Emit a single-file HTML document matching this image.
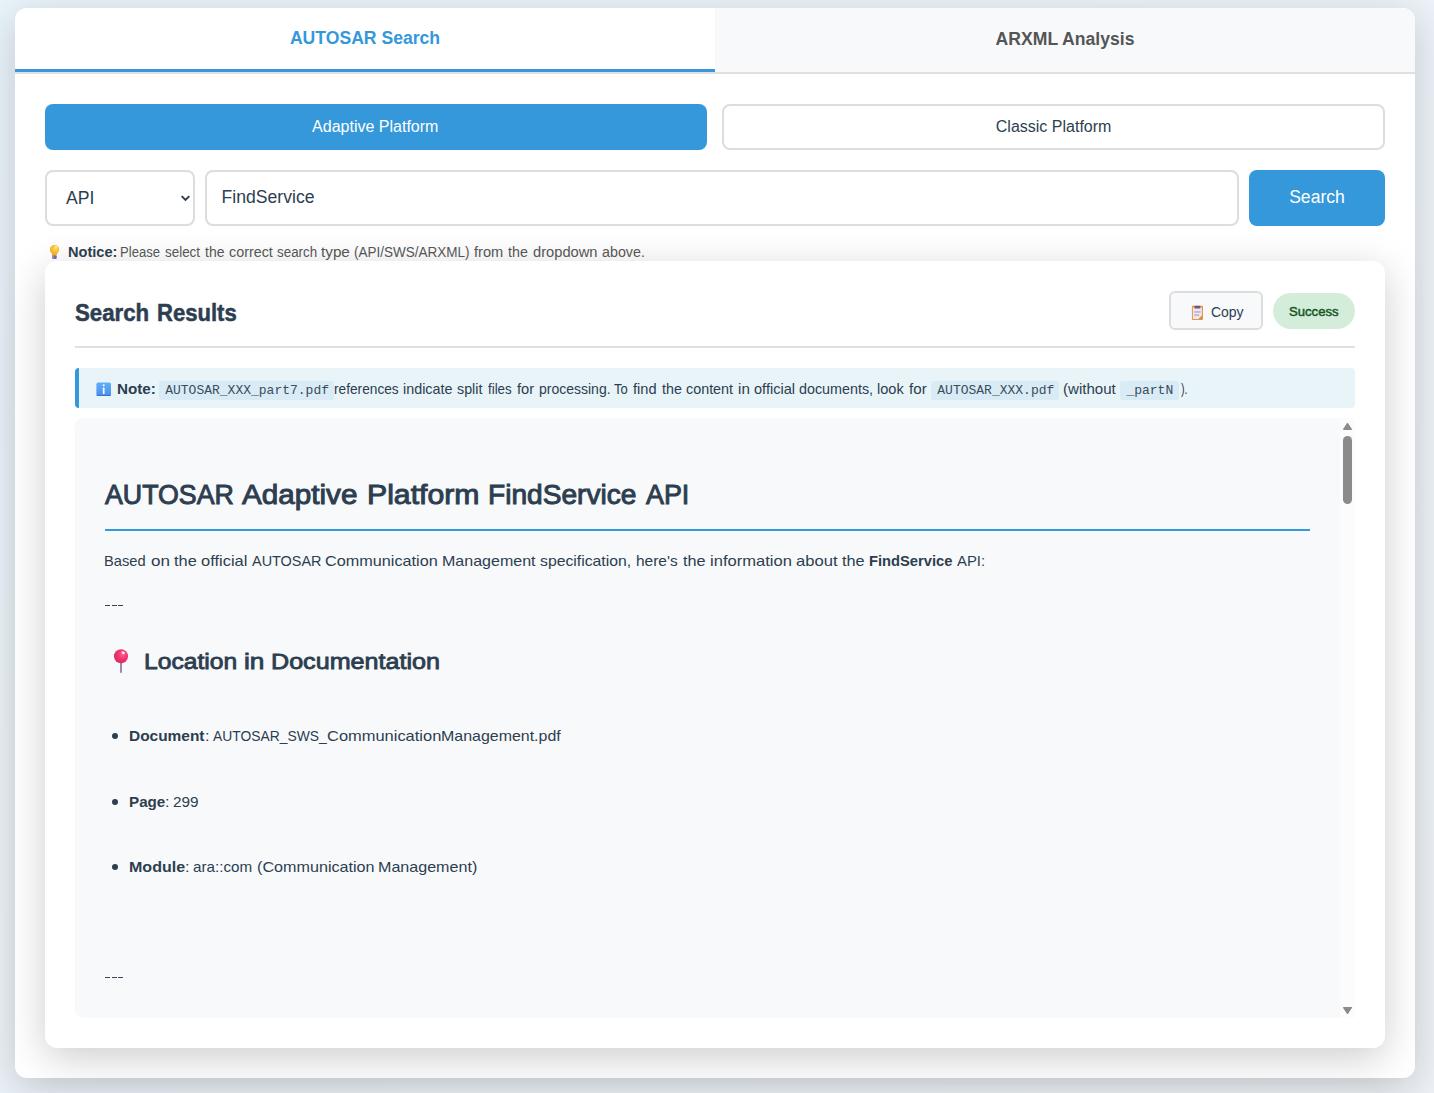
<!DOCTYPE html>
<html lang="en">
<head>
<meta charset="utf-8">
<title>AUTOSAR Search</title>
<style>
*{box-sizing:border-box;margin:0;padding:0}
html,body{width:1434px;height:1093px;overflow:hidden}
body{font-family:"Liberation Sans",sans-serif;background:linear-gradient(135deg,#e9f3fa 0%,#eef2f6 100%);position:relative;color:#2c3e50}
.abs{position:absolute}
.container{position:absolute;left:15px;top:8px;width:1400px;height:1070px;background:#fff;border-radius:12px;box-shadow:0 10px 40px rgba(0,0,0,.18)}
.tabs{position:absolute;left:0;top:0;width:1400px;height:66px;border-bottom:2px solid #e0e0e0;border-radius:12px 12px 0 0;overflow:hidden}
.tab{position:absolute;top:0;height:64px;width:700px;font-weight:bold;font-size:17.6px;text-align:center;border-bottom:3px solid transparent}
.tab.active{left:0;background:#fff;color:#3498db;border-bottom-color:#3498db;line-height:61px}
.tab.inactive{left:700px;background:#f8f9fa;color:#555;line-height:63px}
.pbtn{position:absolute;top:96px;height:46px;border-radius:8px;font-size:16px;text-align:center;line-height:46px}
.pbtn.on{left:30px;width:662px;background:#3498db;color:#fff;padding-right:1.5px}
.pbtn.off{left:707.200px;width:662.800px;background:#fff;color:#2c3e50;border:2px solid #ddd;line-height:42px}
.sel{position:absolute;left:30px;top:162px;width:150px;height:56px;border:2px solid #ddd;border-radius:8px;background:#fff;font-size:17.6px;color:#2c3e50}
.inp{position:absolute;left:190px;top:162px;width:1034px;height:56px;border:2px solid #ddd;border-radius:8px;background:#fff;font-size:17.6px;color:#2c3e50}
.sbtn{position:absolute;left:1234px;top:162px;width:136px;height:56px;border-radius:8px;background:#3498db;color:#fff;font-size:17.6px;text-align:center;line-height:54px}
.t{position:absolute;white-space:pre;line-height:1;transform-origin:0 0}
.results{position:absolute;left:30px;top:253px;width:1340px;height:787px;background:#fff;border-radius:12px;box-shadow:0 10px 40px rgba(0,0,0,.2)}
.hr{position:absolute;left:30px;top:85px;width:1280px;height:2px;background:#e0e0e0}

.copy{position:absolute;left:1124px;top:30.300px;width:94px;height:39px;border:2px solid #ddd;border-radius:6px;background:#f8f9fa}
.succ{position:absolute;left:1228px;top:32px;width:82px;height:36px;border-radius:18px;background:#d4edda}
.note{position:absolute;left:30px;top:107px;width:1280px;height:40px;background:#e8f4f8;border-left:4px solid #3498db;border-radius:4px}
code{font-family:"Liberation Mono",monospace;font-size:13px;position:absolute;top:13px;height:19px;line-height:19px;padding:0 0 0 6px;background:#d9ebf5;border-radius:3px;color:#3b4c5e;white-space:pre}
.content{position:absolute;left:30px;top:157px;width:1280px;height:600px;background:#f8f9fa;border-radius:8px 0 0 8px;overflow:hidden}
.sbar{position:absolute;right:0;top:0;width:15px;height:600px;background:#fcfcfc}
.bul{position:absolute;width:6.200px;height:6.200px;border-radius:50%;background:#2c3e50}
.dash{position:absolute;height:1px;width:4.800px;background:#34465a}
#txt{position:absolute;left:0;top:0;width:1434px;height:1093px}
</style>
</head>
<body>
<div class="container">
  <div class="tabs">
    <div class="tab active">AUTOSAR Search</div>
    <div class="tab inactive">ARXML Analysis</div>
  </div>
  <div class="pbtn on">Adaptive Platform</div>
  <div class="pbtn off">Classic Platform</div>
  <div class="sel"><span class="t" style="left:19px;top:18px">API</span>
    <svg class="abs" style="left:131.500px;top:20.900px" width="14" height="12" viewBox="0 0 14 12"><path d="M2.700 3.100 L6.500 6.900 L10.300 3.100" fill="none" stroke="#2c3e50" stroke-width="2"/></svg>
  </div>
  <div class="inp"><span class="t" style="left:14.600px;top:17px">FindService</span></div>
  <div class="sbtn">Search</div>

  <svg class="abs" style="left:33px;top:235px" width="14" height="17" viewBox="0 0 14 17">
    <defs><radialGradient id="bg" cx="60%" cy="35%" r="70%"><stop offset="0" stop-color="#ffe27a"/><stop offset=".5" stop-color="#fdc02f"/><stop offset="1" stop-color="#f9a825"/></radialGradient></defs>
    <path d="M6.500 2 C3.900 2 1.850 4 1.850 6.550 C1.850 8.200 2.700 9.300 3.500 10.200 C4 10.800 4.300 11.400 4.300 12.200 L8.700 12.200 C8.700 11.400 9 10.800 9.500 10.200 C10.300 9.300 11.150 8.200 11.150 6.550 C11.150 4 9.100 2 6.500 2 Z" fill="url(#bg)"/>
    <ellipse cx="8" cy="3.900" rx="1.100" ry=".7" fill="#fff" opacity=".8" transform="rotate(35 8 3.900)"/>
    <rect x="4.100" y="12.200" width="4.600" height="3.900" rx="1" fill="#8660b5"/>
    <rect x="4.100" y="12.200" width="2.100" height="3.900" rx=".8" fill="#9d92aa"/>
  </svg>

  <div class="results">
    <div class="copy">
      <svg class="abs" style="left:20px;top:11.300px" width="13" height="16" viewBox="0 0 13 16">
        <rect x=".9" y=".8" width="11.100" height="14.300" rx=".8" fill="#e8963e"/>
        <rect x="1.900" y="2.400" width="9" height="11.600" fill="#ece6f5"/>
        <path d="M7.400 14 L10.900 10.500 L10.900 14z" fill="#d98a3a"/>
        <rect x="3.400" y=".8" width="6" height="2.800" rx=".9" fill="#6b5b73"/>
        <rect x="3.200" y="6.200" width="6.400" height="1.500" fill="#b9b0c6"/>
        <rect x="3.200" y="9.300" width="5" height="1.500" fill="#b9b0c6"/>
      </svg>
      <span class="t" style="left:39.900px;top:11.500px;font-size:14px">Copy</span>
    </div>
    <div class="succ"></div>
    <div class="hr"></div>

    <div class="note">
      <svg class="abs" style="left:16.500px;top:13.500px" width="16" height="15" viewBox="0 0 16 15">
        <defs><linearGradient id="ig" x1="0" y1="0" x2="0" y2="1"><stop offset="0" stop-color="#5db0fa"/><stop offset="1" stop-color="#4a8ee8"/></linearGradient></defs>
        <rect x=".4" y=".4" width="14.600" height="13.700" rx="1.800" fill="url(#ig)"/>
        <rect x=".6" y="13" width="14.200" height="1.100" rx=".55" fill="#3a6fd8"/>
        <circle cx="7.700" cy="3.300" r="1.100" fill="#fdf0ff"/>
        <rect x="6.800" y="5.400" width="1.800" height="6.800" rx=".9" fill="#fdf0ff"/>
      </svg>
      <code style="left:80.200px;width:174.500px">AUTOSAR_XXX_part7.pdf</code>
      <code style="left:852.300px;width:128.200px">AUTOSAR_XXX.pdf</code>
      <code style="left:1041.400px;width:58.600px">_partN</code>
    </div>

    <div class="content">
      <div class="sbar">
        <svg class="abs" style="left:0;top:0" width="15" height="600" viewBox="0 0 15 600">
          <path d="M3.700 11.300 L7.500 5.700 L11.300 11.300z" fill="#8b8b8b" stroke="#8b8b8b" stroke-width="1.400" stroke-linejoin="round"/>
          <rect x="3" y="18" width="9" height="68" rx="4.500" fill="#8b8b8b"/>
          <path d="M3.700 589.700 L7.500 595.300 L11.300 589.700z" fill="#8b8b8b" stroke="#8b8b8b" stroke-width="1.400" stroke-linejoin="round"/>
        </svg>
      </div>
      <div class="abs" style="left:30px;top:111.0px;width:1205px;height:2px;background:#3498db"></div>
      <div class="dash" style="left:30.200px;top:187.0px"></div><div class="dash" style="left:36.900px;top:187.0px"></div><div class="dash" style="left:43.100px;top:187.0px"></div>
      <svg class="abs" style="left:38px;top:230.0px" width="18" height="26" viewBox="0 0 18 26">
        <defs><radialGradient id="pg" cx="62%" cy="38%" r="65%"><stop offset="0" stop-color="#ff5c8d"/><stop offset=".55" stop-color="#f2336d"/><stop offset="1" stop-color="#d22d62"/></radialGradient></defs>
        <rect x="7" y="14.500" width="2" height="10.300" fill="#9b8ba8"/>
        <circle cx="8" cy="8.200" r="7" fill="url(#pg)"/>
        <ellipse cx="10.200" cy="4.800" rx="1.900" ry="1.300" fill="#fff" opacity=".85" transform="rotate(25 10.200 4.800)"/>
      </svg>
      <div class="bul" style="left:36.900px;top:314.5px"></div>
      <div class="bul" style="left:36.900px;top:380.8px"></div>
      <div class="bul" style="left:36.900px;top:445.8px"></div>
      <div class="dash" style="left:30.200px;top:559.0px"></div><div class="dash" style="left:36.900px;top:559.0px"></div><div class="dash" style="left:43.100px;top:559.0px"></div>
    </div>
  </div>
</div>
<div id="txt">
<span class="t" style="left:67.96px;top:245.0px;font-size:14.0px;font-weight:bold;transform:scaleX(1.0407)">Notice:</span>
<span class="t" style="left:74.76px;top:302.0px;font-size:23.5px;font-weight:bold;-webkit-text-stroke:0.5px #2c3e50;transform:scaleX(0.9466)">Search</span>
<span class="t" style="left:156.57px;top:302.0px;font-size:23.5px;font-weight:bold;-webkit-text-stroke:0.5px #2c3e50;transform:scaleX(0.9384)">Results</span>
<span class="t" style="left:1288.55px;top:305.4px;font-size:13.4px;-webkit-text-stroke:0.5px #155724;color:#155724;transform:scaleX(0.9789)">Success</span>
<span class="t" style="left:117.1px;top:382.7px;font-size:13.9px;font-weight:bold;transform:scaleX(1.0955)">Note:</span>
<span class="t" style="left:1063.04px;top:382.7px;font-size:13.9px;transform:scaleX(1.0835)">(without</span>
<span class="t" style="left:1180.7px;top:382.7px;font-size:13.9px;transform:scaleX(0.7704)">).</span>
<span class="t" style="left:104.95px;top:479.6px;font-size:28.4px;-webkit-text-stroke:1.0px #2c3e50;transform:scaleX(0.9425)">AUTOSAR</span>
<span class="t" style="left:241.98px;top:479.6px;font-size:28.4px;-webkit-text-stroke:1.0px #2c3e50;transform:scaleX(1.0448)">Adaptive</span>
<span class="t" style="left:366.55px;top:479.6px;font-size:28.4px;-webkit-text-stroke:1.0px #2c3e50;transform:scaleX(1.0646)">Platform</span>
<span class="t" style="left:488.28px;top:479.6px;font-size:28.4px;-webkit-text-stroke:1.0px #2c3e50;transform:scaleX(0.9899)">FindService</span>
<span class="t" style="left:645.55px;top:479.6px;font-size:28.4px;-webkit-text-stroke:1.0px #2c3e50;transform:scaleX(0.9472)">API</span>
<span class="t" style="left:868.82px;top:553.0px;font-size:15.0px;font-weight:bold;transform:scaleX(0.9805)">FindService</span>
<span class="t" style="left:143.97px;top:649.7px;font-size:22.7px;-webkit-text-stroke:0.85px #2c3e50;transform:scaleX(1.0851)">Location</span>
<span class="t" style="left:243.74px;top:649.7px;font-size:22.7px;-webkit-text-stroke:0.85px #2c3e50;transform:scaleX(1.1568)">in</span>
<span class="t" style="left:271.34px;top:649.7px;font-size:22.7px;-webkit-text-stroke:0.85px #2c3e50;transform:scaleX(1.1076)">Documentation</span>
<span class="t" style="left:129.07px;top:728.0px;font-size:15.0px;font-weight:bold;transform:scaleX(1.0289)">Document</span>
<span class="t" style="left:205.18px;top:728.0px;font-size:15.0px;transform:scaleX(1.0897)">:</span>
<span class="t" style="left:129.09px;top:794.0px;font-size:15.0px;font-weight:bold;transform:scaleX(1.0127)">Page</span>
<span class="t" style="left:165.08px;top:794.0px;font-size:15.0px;transform:scaleX(1.0897)">:</span>
<span class="t" style="left:172.59px;top:794.0px;font-size:15.0px;transform:scaleX(1.0236)">299</span>
<span class="t" style="left:129.03px;top:859.0px;font-size:15.0px;font-weight:bold;transform:scaleX(1.0679)">Module</span>
<span class="t" style="left:184.98px;top:859.0px;font-size:15.0px;transform:scaleX(1.0897)">:</span>
<span class="t" style="left:193.13px;top:859.0px;font-size:15.0px;transform:scaleX(1.0145)">ara::com</span>
<span class="t" style="left:120.28px;top:245.0px;font-size:14.0px;color:#555;transform:scaleX(0.9343)">Please</span>
<span class="t" style="left:164.64px;top:245.0px;font-size:14.0px;color:#555;transform:scaleX(0.9569)">select</span>
<span class="t" style="left:205.26px;top:245.0px;font-size:14.0px;color:#555;transform:scaleX(0.997)">the</span>
<span class="t" style="left:228.89px;top:245.0px;font-size:14.0px;color:#555;transform:scaleX(1.0234)">correct</span>
<span class="t" style="left:277.44px;top:245.0px;font-size:14.0px;color:#555;transform:scaleX(0.9553)">search</span>
<span class="t" style="left:321.34px;top:245.0px;font-size:14.0px;color:#555;transform:scaleX(1.0906)">type</span>
<span class="t" style="left:353.81px;top:245.0px;font-size:14.0px;color:#555;transform:scaleX(0.9646)">(API/SWS/ARXML)</span>
<span class="t" style="left:474.35px;top:245.0px;font-size:14.0px;color:#555;transform:scaleX(1.0427)">from</span>
<span class="t" style="left:508.45px;top:245.0px;font-size:14.0px;color:#555;transform:scaleX(1.0182)">the</span>
<span class="t" style="left:533.08px;top:245.0px;font-size:14.0px;color:#555;transform:scaleX(1.0493)">dropdown</span>
<span class="t" style="left:602.09px;top:245.0px;font-size:14.0px;color:#555;transform:scaleX(1.02)">above.</span>
<span class="t" style="left:334.21px;top:382.7px;font-size:13.9px;transform:scaleX(0.9856)">references</span>
<span class="t" style="left:403.26px;top:382.7px;font-size:13.9px;transform:scaleX(1.0345)">indicate</span>
<span class="t" style="left:457.4px;top:382.7px;font-size:13.9px;transform:scaleX(1.0283)">split</span>
<span class="t" style="left:488.26px;top:382.7px;font-size:13.9px;transform:scaleX(0.9592)">files</span>
<span class="t" style="left:517.05px;top:382.7px;font-size:13.9px;transform:scaleX(1.06)">for</span>
<span class="t" style="left:538.79px;top:382.7px;font-size:13.9px;transform:scaleX(1.0075)">processing.</span>
<span class="t" style="left:614.29px;top:382.7px;font-size:13.9px;transform:scaleX(0.9383)">To</span>
<span class="t" style="left:633.45px;top:382.7px;font-size:13.9px;transform:scaleX(1.0507)">find</span>
<span class="t" style="left:661.55px;top:382.7px;font-size:13.9px;transform:scaleX(1.0253)">the</span>
<span class="t" style="left:685.99px;top:382.7px;font-size:13.9px;transform:scaleX(1.0331)">content</span>
<span class="t" style="left:738.0px;top:382.7px;font-size:13.9px;transform:scaleX(1.0963)">in</span>
<span class="t" style="left:754.08px;top:382.7px;font-size:13.9px;transform:scaleX(1.0488)">official</span>
<span class="t" style="left:799.49px;top:382.7px;font-size:13.9px;transform:scaleX(1.0312)">documents,</span>
<span class="t" style="left:877.33px;top:382.7px;font-size:13.9px;transform:scaleX(1.0486)">look</span>
<span class="t" style="left:909.14px;top:382.7px;font-size:13.9px;transform:scaleX(1.0915)">for</span>
<span class="t" style="left:104.07px;top:553.0px;font-size:15.0px;transform:scaleX(0.9796)">Based</span>
<span class="t" style="left:150.62px;top:553.0px;font-size:15.0px;transform:scaleX(1.136)">on</span>
<span class="t" style="left:173.63px;top:553.0px;font-size:15.0px;transform:scaleX(1.0896)">the</span>
<span class="t" style="left:200.85px;top:553.0px;font-size:15.0px;transform:scaleX(1.0975)">official</span>
<span class="t" style="left:251.93px;top:553.0px;font-size:15.0px;transform:scaleX(0.9624)">AUTOSAR</span>
<span class="t" style="left:325.12px;top:553.0px;font-size:15.0px;transform:scaleX(1.082)">Communication</span>
<span class="t" style="left:441.56px;top:553.0px;font-size:15.0px;transform:scaleX(1.0678)">Management</span>
<span class="t" style="left:540.11px;top:553.0px;font-size:15.0px;transform:scaleX(1.0514)">specification,</span>
<span class="t" style="left:635.86px;top:553.0px;font-size:15.0px;transform:scaleX(1.031)">here's</span>
<span class="t" style="left:682.53px;top:553.0px;font-size:15.0px;transform:scaleX(1.0797)">the</span>
<span class="t" style="left:709.9px;top:553.0px;font-size:15.0px;transform:scaleX(1.1036)">information</span>
<span class="t" style="left:795.87px;top:553.0px;font-size:15.0px;transform:scaleX(1.107)">about</span>
<span class="t" style="left:842.43px;top:553.0px;font-size:15.0px;transform:scaleX(1.0847)">the</span>
<span class="t" style="left:957.02px;top:553.0px;font-size:15.0px;transform:scaleX(0.991)">API:</span>
<span class="t" style="left:213.23px;top:728.0px;font-size:15.0px;transform:scaleX(0.9241)">AUTOSAR_SWS_</span>
<span class="t" style="left:327.01px;top:728.0px;font-size:15.0px;transform:scaleX(1.0967)">Communication</span>
<span class="t" style="left:440.77px;top:728.0px;font-size:15.0px;transform:scaleX(1.0632)">Management.pdf</span>
<span class="t" style="left:256.92px;top:859.0px;font-size:15.0px;transform:scaleX(1.0764)">(Communication</span>
<span class="t" style="left:378.46px;top:859.0px;font-size:15.0px;transform:scaleX(1.0722)">Management)</span>
</div>
</body>
</html>
